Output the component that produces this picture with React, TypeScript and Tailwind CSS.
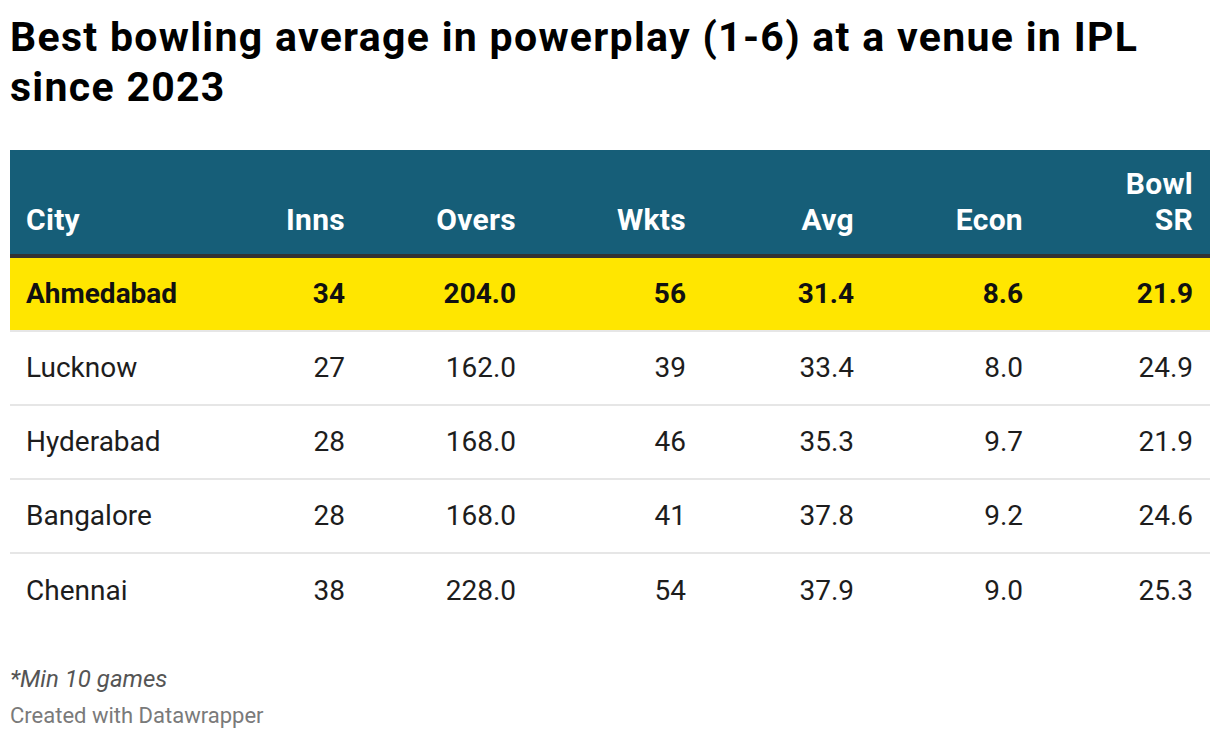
const rows = [
  { city: 'Ahmedabad', inns: '34', overs: '204.0', wkts: '56', avg: '31.4', econ: '8.6', sr: '21.9', highlight: true },
  { city: 'Lucknow', inns: '27', overs: '162.0', wkts: '39', avg: '33.4', econ: '8.0', sr: '24.9' },
  { city: 'Hyderabad', inns: '28', overs: '168.0', wkts: '46', avg: '35.3', econ: '9.7', sr: '21.9' },
  { city: 'Bangalore', inns: '28', overs: '168.0', wkts: '41', avg: '37.8', econ: '9.2', sr: '24.6' },
  { city: 'Chennai', inns: '38', overs: '228.0', wkts: '54', avg: '37.9', econ: '9.0', sr: '25.3' },
];

const gridClassName = 'grid grid-cols-[182px_170px_171px_170px_168px_169px_170px]';
const cellClassName = 'px-[17px] text-right';

export default function App() {
  return (
    <div className="h-[740px] w-[1220px] bg-white px-[10px] pt-[12px] font-['Roboto',sans-serif] text-[#1d1d1d]">
      <h1 className="w-[1200px] text-[41px] font-bold leading-[50px] tracking-[1.3px] text-black">
        Best bowling average in powerplay (1-6) at a venue in IPL since 2023
      </h1>

      <div className="mt-[38px] w-[1200px]">
        <div className={`${gridClassName} h-[108px] items-end border-b-4 border-[#333333] bg-[#165e78] pb-[16px] text-[30px] font-bold leading-[36px] tracking-[0.3px] text-white`}>
          <div className="px-[16px]">City</div>
          <div className={cellClassName}>Inns</div>
          <div className={cellClassName}>Overs</div>
          <div className={cellClassName}>Wkts</div>
          <div className={cellClassName}>Avg</div>
          <div className={cellClassName}>Econ</div>
          <div className={cellClassName}>
            Bowl
            <br />
            SR
          </div>
        </div>

        {rows.map((row, index) => (
          <div
            className={`${gridClassName} h-[74px] items-center text-[28px] leading-[32px] ${
              row.highlight ? 'bg-[#ffe600] font-bold text-[#111111]' : ''
            } ${index < rows.length - 1 ? 'border-b-2 border-[#e6e6e6]' : ''}`}
            key={row.city}
          >
            <div className="px-[16px]">{row.city}</div>
            <div className={cellClassName}>{row.inns}</div>
            <div className={cellClassName}>{row.overs}</div>
            <div className={cellClassName}>{row.wkts}</div>
            <div className={cellClassName}>{row.avg}</div>
            <div className={cellClassName}>{row.econ}</div>
            <div className={cellClassName}>{row.sr}</div>
          </div>
        ))}
      </div>

      <p className="mt-[36px] text-[24px] italic leading-[30px] text-[#555555]">*Min 10 games</p>
      <p className="mt-[9px] text-[22px] leading-[26px] text-[#7a7a7a]">Created with Datawrapper</p>
    </div>
  );
}
